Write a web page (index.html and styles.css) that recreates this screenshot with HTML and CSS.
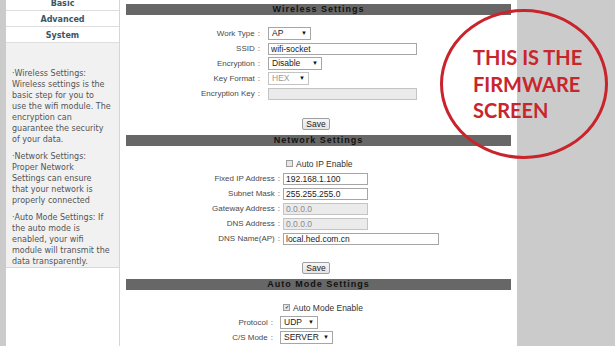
FILE: index.html
```html
<!DOCTYPE html>
<html lang="en">
<head>
  <meta charset="UTF-8" />
  <meta name="viewport" content="width=device-width, initial-scale=1.0"/>
  <title>Wifi Module Settings</title>
  <link rel="stylesheet" href="styles.css">
</head>
<body>

<div class="page">
  <div class="sidebar">
    <div class="menu">
      <a href="#">Basic</a>
      <a href="#">Advanced</a>
      <a href="#">System</a>
    </div>
    <div class="help">
      <p>·Wireless Settings:<br>Wireless settings is the<br>basic step for you to<br>use the wifi module. The<br>encryption can<br>guarantee the security<br>of your data.</p>
      <p>·Network Settings:<br>Proper Network<br>Settings can ensure<br>that your network is<br>properly connected</p>
      <p>·Auto Mode Settings: If<br>the auto mode is<br>enabled, your wifi<br>module will transmit the<br>data transparently.</p>
    </div>
  </div>

  <div class="main">
    <h2 class="section-title">Wireless Settings</h2>
    <div class="form form-wireless">
      <label>Work Type</label>
      <div class="select sel-type">AP</div>
      <label>SSID</label>
      <input type="text" class="txt txt-long" value="wifi-socket" />
      <label>Encryption</label>
      <div class="select sel-enc">Disable</div>
      <label>Key Format</label>
      <div class="select sel-fmt disabled">HEX</div>
      <label>Encryption Key</label>
      <input type="text" class="txt txt-long" disabled />
    </div>
    <div class="actions"><button>Save</button></div>

    <h2 class="section-title">Network Settings</h2>
    <div class="form form-network">
      <span class="check-row"><span class="box"></span>Auto IP Enable</span>
      <label>Fixed IP Address</label>
      <input type="text" class="txt txt-short" value="192.168.1.100" />
      <label>Subnet Mask</label>
      <input type="text" class="txt txt-short" value="255.255.255.0" />
      <label>Gateway Address</label>
      <input type="text" class="txt txt-short" value="0.0.0.0" disabled />
      <label>DNS Address</label>
      <input type="text" class="txt txt-short" value="0.0.0.0" disabled />
      <label>DNS Name(AP)</label>
      <input type="text" class="txt txt-dns" value="local.hed.com.cn" />
    </div>
    <div class="actions"><button>Save</button></div>

    <h2 class="section-title">Auto Mode Settings</h2>
    <div class="form form-auto">
      <span class="check-row"><span class="box checked">✔</span>Auto Mode Enable</span>
      <label>Protocol</label>
      <div class="select sel-proto">UDP</div>
      <label>C/S Mode</label>
      <div class="select sel-cs">SERVER</div>
    </div>
  </div>

  <div class="stamp">THIS IS THE<br>FIRMWARE<br>SCREEN</div>
</div>

</body>
</html>
```

FILE: styles.css
```css
* { box-sizing: border-box; margin: 0; padding: 0; }
body { background: #cbcbcb; font-family: "Liberation Sans", Arial, sans-serif; height: 346px; overflow: hidden; }
.page { display: flex; height: 346px; position: relative; }

/* left column */
.sidebar { width: 114px; margin-left: 6px; background: #fff; border-right: 1px solid #d6d6d6; }
.menu { margin-top: -5px; }
.menu a {
  display: block; height: 16px;
  border-bottom: 1px solid #dedede; text-align: center;
  font: bold 8px/17px "DejaVu Sans", Verdana, sans-serif;
  color: #3a5666; text-decoration: none;
}
.help {
  background: #f1f1f1; padding: 25px 6px 0;
  border-bottom: 1px solid #d8d8d8;
  font: 8px/11px "DejaVu Sans", Verdana, sans-serif; color: #545454;
}
.help p { margin-bottom: 6px; }
.help p:last-child { margin-bottom: 0; }

/* settings panel */
.main { width: 397px; background: #fff; padding: 4px 6px 0; }
.section-title {
  height: 11px; background: #676767; color: #121212;
  font-size: 9px; line-height: 11px; letter-spacing: 1px; text-align: center;
}
.form {
  display: grid; grid-auto-rows: 15px; align-items: center;
  margin-top: 11px; font-size: 8px;
}
.form-wireless { grid-template-columns: 134px auto; column-gap: 8px; }
.form-network { grid-template-columns: 154px auto; column-gap: 3px; margin-top: 10px; }
.form-auto { grid-template-columns: 147px auto; column-gap: 7px; margin-top: 10px; }

.form label { text-align: right; color: #4a4a4a; white-space: nowrap; }
.form label::after { content: ":"; margin-left: 3px; }

.txt {
  height: 12px; border: 1px solid #a6a6a6; padding: 0 2px;
  font: 8.5px "Liberation Sans", Arial, sans-serif; color: #222; background: #fff;
}
.txt:disabled { background: #ebebeb; border-color: #c4c4c4; color: #8a8a8a; }
.txt-long { width: 149px; }
.txt-short { width: 85px; }
.txt-dns { width: 156px; }

.select {
  position: relative; height: 13px; line-height: 11px; font-size: 8.5px;
  border: 1px solid #a6a6a6; padding: 0 3px; color: #222; background: #fff;
}
.select::after {
  content: "▼"; position: absolute; right: 3px; top: 0;
  font-size: 6px; line-height: 11px; color: #111;
}
.select.disabled { color: #999; border-color: #c4c4c4; }
.sel-type { width: 43px; }
.sel-enc { width: 54px; }
.sel-fmt { width: 41px; }
.sel-proto { width: 38px; }
.sel-cs { width: 53px; }

.check-row { grid-column: 2; display: flex; align-items: center; color: #333; font-size: 8.5px; }
.box {
  width: 7px; height: 7px; margin: 0 3px; border: 1px solid #9c9c9c; background: #e6e6e6;
  font-size: 5px; line-height: 5px; text-align: center; color: #444;
}

.actions { text-align: center; padding-right: 5px; margin-top: 12px; height: 12px; }
.actions + .section-title { margin-top: 10px; }
.form-network + .actions { margin-top: 11px; }
button {
  width: 28px; height: 12px; font: 8.5px "Liberation Sans", Arial, sans-serif; color: #222;
  background: linear-gradient(#f6f6f6, #e4e4e4); border: 1px solid #9f9f9f; border-radius: 2px;
}

/* red annotation over the screenshot */
.stamp {
  position: absolute; left: 440px; top: 9px; width: 168px; height: 150px;
  border: 3px solid #c9232b; border-radius: 50%;
  padding: 32px 0 0 30px;
  font: 700 20px/26.5px Lato, "Open Sans", sans-serif; color: #c8252d;
}
```
